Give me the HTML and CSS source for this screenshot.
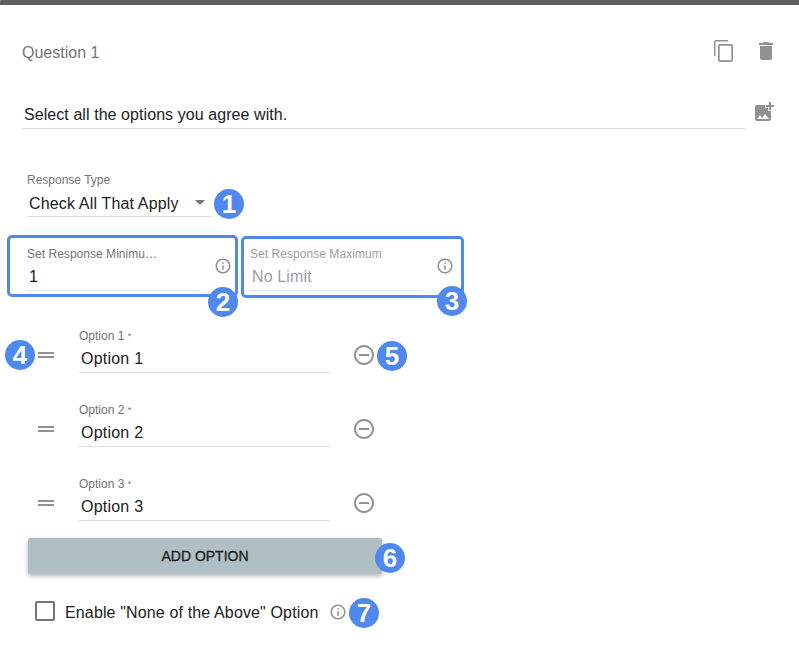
FILE: index.html
```
<!DOCTYPE html>
<html lang="en">
<head>
<meta charset="utf-8">
<title>Question editor</title>
<link rel="stylesheet" href="styles.css">
</head>
<body>
<svg width="0" height="0" class="sprite">
  <symbol id="copy" viewBox="0 0 24 24"><path d="M16 1H4c-1.1 0-2 .9-2 2v14h1.500V2.500H16V1zm3 4H8c-1.1 0-2 .9-2 2v14c0 1.1.9 2 2 2h11c1.1 0 2-.9 2-2V7c0-1.1-.9-2-2-2zm.3 16.300H7.700V6.700h11.600v14.600z"/></symbol>
  <symbol id="trash" viewBox="0 0 24 24"><path d="M6 19c0 1.1.9 2 2 2h8c1.1 0 2-.9 2-2V7H6v12zM19 4h-3.5l-1-1h-5l-1 1H5v2h14V4z"/></symbol>
  <symbol id="photo" viewBox="0 0 24 24"><path d="M19 7v2.99s-1.99.01-2 0V7h-3s.01-1.99 0-2h3V2h2v3h3v2h-3zm-3 4V8h-3V5H5c-1.1 0-2 .9-2 2v12c0 1.1.9 2 2 2h12c1.1 0 2-.9 2-2v-8h-3zM5 19l3-4 2 3 3-4 4 5H5z"/></symbol>
  <symbol id="info" viewBox="0 0 24 24"><path d="M11 7h2v2h-2zm0 4h2v6h-2zm1-9C6.48 2 2 6.48 2 12s4.48 10 10 10 10-4.48 10-10S17.52 2 12 2zm0 18c-4.41 0-8-3.59-8-8s3.59-8 8-8 8 3.59 8 8-3.59 8-8 8z"/></symbol>
  <symbol id="minus" viewBox="0 0 24 24"><path d="M7 11v2h10v-2H7zm5-9C6.48 2 2 6.48 2 12s4.48 10 10 10 10-4.48 10-10S17.52 2 12 2zm0 18c-4.41 0-8-3.59-8-8s3.59-8 8-8 8 3.59 8 8-3.59 8-8 8z"/></symbol>
  <symbol id="drag" viewBox="0 0 24 24"><path d="M20 9H4v2h16V9zM4 15h16v-2H4v2z"/></symbol>
</svg>
<main class="editor">
  <header class="head">
    <h1 class="title">Question 1</h1>
    <svg class="icon"><use href="#copy"/></svg>
    <svg class="icon"><use href="#trash"/></svg>
  </header>
  <div class="prompt">
    <div class="prompt-text"><span>Select all the options you agree with.</span></div>
    <svg class="icon"><use href="#photo"/></svg>
  </div>
  <div class="field type">
    <div class="label">Response Type</div>
    <div class="value"><span class="type-value">Check All That Apply</span><i class="arrow"></i></div>
    <b class="badge b1">1</b>
  </div>
  <div class="limits">
    <section class="limit min">
      <div class="field"><div class="label">Set Response Minimu…</div><div class="value">1</div></div>
      <svg class="info"><use href="#info"/></svg>
      <b class="badge b2">2</b>
    </section>
    <section class="limit max">
      <div class="field"><div class="label">Set Response Maximum</div><div class="value">No Limit</div></div>
      <svg class="info"><use href="#info"/></svg>
      <b class="badge b3">3</b>
    </section>
  </div>
  <div class="options">
    <div class="option"><svg class="icon"><use href="#drag"/></svg><div class="field"><div class="label">Option 1 <span class="star">*</span></div><div class="value">Option 1</div></div><svg class="icon"><use href="#minus"/></svg><b class="badge b4">4</b><b class="badge b5">5</b></div>
    <div class="option"><svg class="icon"><use href="#drag"/></svg><div class="field"><div class="label">Option 2 <span class="star">*</span></div><div class="value">Option 2</div></div><svg class="icon"><use href="#minus"/></svg></div>
    <div class="option"><svg class="icon"><use href="#drag"/></svg><div class="field"><div class="label">Option 3 <span class="star">*</span></div><div class="value">Option 3</div></div><svg class="icon"><use href="#minus"/></svg></div>
  </div>
  <div class="add"><span>ADD OPTION</span><b class="badge b6">6</b></div>
  <div class="none"><i class="box"></i><span class="none-text">Enable "None of the Above" Option</span><svg class="info"><use href="#info"/></svg><b class="badge b7">7</b></div>
</main>
</body>
</html>
```
FILE: styles.css
```
* { box-sizing: border-box; }
body { margin: 0; background: #fff; font: 16px/20px "Liberation Sans", Arial, sans-serif; color: #212121; }
.sprite { position: absolute; }
.editor { height: 666px; border-top: 5px solid #616161; border-top-left-radius: 1px; overflow: hidden; }
.icon { width: 24px; height: 24px; fill: #919191; flex: none; display: block; }
.info { width: 18px; height: 18px; fill: #919191; flex: none; display: block; }
.head { display: flex; align-items: center; height: 24px; margin: 34px 21px 0 22px; gap: 18.5px; }
.title { flex: 1; margin: 0; font-size: 16px; font-weight: 400; color: #757575; line-height: 24px; padding-top: 3px; }
.prompt { display: flex; margin: 37px 23px 0 22px; height: 29px; justify-content: space-between; }
.prompt-text { width: 723px; border-bottom: 1px solid #e0e0e0; padding: 5px 0 0 2px; letter-spacing: .07px; }
.field { position: relative; border-bottom: 1px solid #e0e0e0; }
.label { font-size: 12px; line-height: 14px; height: 14px; color: #757575; white-space: nowrap; }
.value { height: 29px; line-height: 20px; padding: 6px 0 0 2px; white-space: nowrap; }
.type { width: 185px; height: 44px; margin: 44px 0 0 27px; }
.type .value { display: flex; justify-content: space-between; padding: 7px 7px 0 2px; }
.type-value { letter-spacing: .16px; }
.arrow { width: 0; height: 0; border: 5px solid transparent; border-top-color: #757575; border-bottom: 0; margin-top: 6px; }
.limits { display: flex; align-items: flex-start; gap: 3px; margin: 18px 0 0 6.5px; }
.limit { position: relative; display: flex; align-items: flex-start; border: 3px solid #4f89ee; border-radius: 5px; height: 62px; }
.limit .field { width: 172px; height: 44px; }
.min { width: 231px; padding: 9px 0 0 17.5px; }
.min .label { letter-spacing: .03px; }
.min .info { margin: 10px 0 0 14.5px; }
.max { width: 223px; margin-top: 1px; padding: 8px 0 0 6.5px; color: #9e9e9e; }
.max .label { color: #9e9e9e; letter-spacing: .05px; }
.max .value { letter-spacing: .13px; }
.max .info { margin: 10px 0 0 14px; }
.options { margin: 31px 0 0 34px; }
.option { position: relative; display: flex; height: 74px; }
.option .field { width: 251px; height: 44px; margin: 0 22px 0 21px; }
.option .value { letter-spacing: .22px; }
.option .icon { margin-top: 14px; }
.star { font-size: 9px; vertical-align: 1px; line-height: 1; }
.add { position: relative; width: 354px; height: 36px; margin: -13px 0 0 28px; border-radius: 2px; background: #b0bec5; box-shadow: 0 2px 5px rgba(0,0,0,.3); text-align: center; font-size: 14px; line-height: 36px; -webkit-text-stroke: .3px #212121; }
.none { position: relative; display: flex; align-items: center; width: 344px; height: 24px; margin: 25px 0 0 35px; }
.box { width: 20px; height: 20px; border: 2px solid #757575; border-radius: 2px; }
.none-text { width: 254px; margin: 4px 9.5px 0 10px; white-space: nowrap; letter-spacing: .14px; }
.none .info { margin-top: 2px; }
.badge { position: absolute; width: 30px; height: 30px; border-radius: 50%; background: #4f89ee; color: #fff; font-size: 26px; line-height: 30px; letter-spacing: 0; text-align: center; -webkit-text-stroke: 0; }
.b1 { left: 187px; top: 16px; }
.b2 { right: -3.5px; bottom: -23px; }
.b3 { right: -6.5px; bottom: -21px; }
.b4 { left: -29px; top: 11px; }
.b5 { left: 343px; top: 12px; }
.b6 { right: -23px; top: 5px; }
.b7 { right: 0; top: -1px; }
```
